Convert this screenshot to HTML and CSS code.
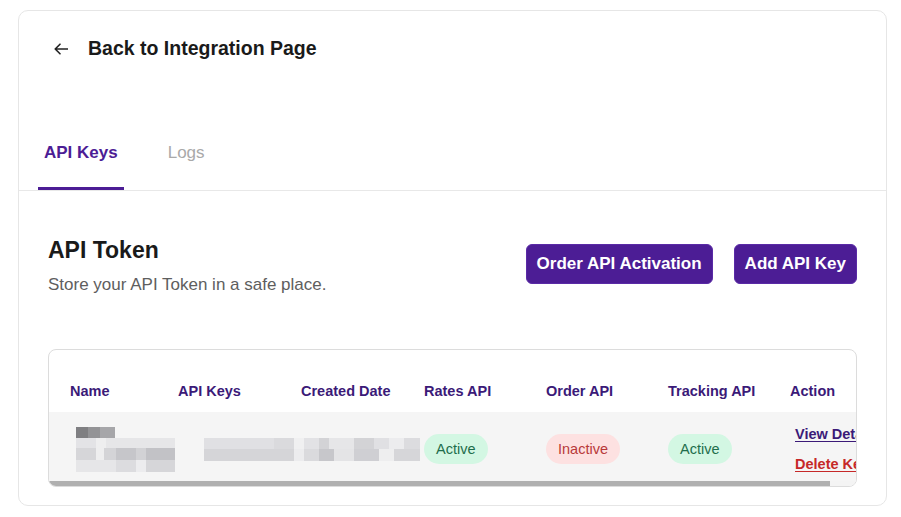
FILE: index.html
```html
<!DOCTYPE html>
<html lang="en">
<head>
<meta charset="utf-8">
<title>API Keys</title>
<link rel="stylesheet" href="styles.css">
</head>
<body>
<div class="card">
  <div class="back">
    <svg class="back-icon" width="14" height="12" viewBox="0 0 14 12" aria-hidden="true">
      <path d="M13.5 6H1.2M6 1.2L1.2 6L6 10.8" fill="none" stroke="#222" stroke-width="1.6" stroke-linecap="round" stroke-linejoin="round"/>
    </svg>
    <span class="back-text">Back to Integration Page</span>
  </div>

  <div class="tabs">
    <div class="tab tab-active">API Keys</div>
    <div class="tab">Logs</div>
  </div>

  <div class="section">
    <div class="section-head">
      <div class="head-text">
        <h1 class="title">API Token</h1>
        <p class="subtitle">Store your API Token in a safe place.</p>
      </div>
      <div class="actions">
        <button class="btn">Order API Activation</button>
        <button class="btn">Add API Key</button>
      </div>
    </div>

    <div class="table-box">
      <div class="table-scroll">
        <table class="keys">
          <colgroup>
            <col class="c-name"><col class="c-key"><col class="c-date"><col class="c-api"><col class="c-api"><col class="c-api"><col class="c-action">
          </colgroup>
          <thead>
            <tr>
              <th class="first">Name</th>
              <th>API Keys</th>
              <th>Created Date</th>
              <th>Rates API</th>
              <th>Order API</th>
              <th>Tracking API</th>
              <th>Action</th>
            </tr>
          </thead>
          <tbody>
            <tr>
              <td class="first">
                <div class="blur-name">
                  <div class="bn1"></div>
                  <div class="bn2"></div>
                  <div class="bn3"></div>
                  <div class="bn4"></div>
                </div>
              </td>
              <td colspan="2" class="key-cell">
                <div class="blur-key">
                  <div class="bk1"></div>
                  <div class="bk2"></div>
                </div>
              </td>
              <td><span class="badge badge-on">Active</span></td>
              <td><span class="badge badge-off">Inactive</span></td>
              <td><span class="badge badge-on">Active</span></td>
              <td class="action-cell">
                <a class="link link-view" href="#">View Details</a>
                <a class="link link-delete" href="#">Delete Key</a>
              </td>
            </tr>
          </tbody>
        </table>
      </div>
      <div class="scrollbar"><div class="thumb"></div></div>
    </div>
  </div>
</div>
</body>
</html>
```

FILE: styles.css
```css
* { box-sizing: border-box; }

html, body {
  margin: 0;
  padding: 0;
  background: #ffffff;
}

body {
  font-family: "Liberation Sans", Arial, sans-serif;
  color: #1a1a1a;
}

.card {
  width: 869px;
  margin: 10px 0 0 18px;
  border: 1px solid #e6e6e6;
  border-radius: 10px;
  background: #ffffff;
  padding-top: 25px;
}

.back {
  display: flex;
  align-items: center;
  gap: 20px;
  padding-left: 35px;
  height: 24px;
}

.back-icon { display: block; margin-top: 2px; }

.back-text {
  font-size: 19.5px;
  font-weight: 700;
  line-height: 24px;
  color: #1a1a1a;
}

.tabs {
  display: flex;
  gap: 38px;
  margin-top: 83px;
  padding-left: 19px;
  border-bottom: 1px solid #e8e8e8;
}

.tab {
  font-size: 17px;
  line-height: 20px;
  padding: 0 6px 24px;
  border-bottom: 3px solid transparent;
  color: #a9a9a9;
}

.tab-active {
  color: #4c1d95;
  font-weight: 700;
  border-bottom-color: #4c1d95;
}

.section {
  padding: 45px 29px 18px;
}

.section-head {
  display: flex;
  align-items: flex-start;
  justify-content: space-between;
}

.title {
  margin: 0;
  font-size: 23px;
  line-height: 28px;
  font-weight: 700;
  color: #1a1a1a;
}

.subtitle {
  margin: 10px 0 0;
  font-size: 17px;
  line-height: 22px;
  color: #5e5e5e;
}

.actions {
  display: flex;
  gap: 21px;
  margin-top: 8px;
}

.btn {
  height: 40px;
  padding: 0 10px;
  border: 1px solid #5a2aa6;
  border-radius: 6px;
  background: #4c1d95;
  color: #ffffff;
  font-family: "Liberation Sans", Arial, sans-serif;
  font-size: 17px;
  font-weight: 700;
}

.table-box {
  margin-top: 53px;
  border: 1px solid #dcdcdc;
  border-radius: 8px;
  overflow: hidden;
  background: #ffffff;
}

.table-scroll { overflow: hidden; }

.keys {
  table-layout: fixed;
  width: 881px;
  border-collapse: collapse;
  font-size: 14.5px;
}

.c-name { width: 129px; }
.c-key { width: 123px; }
.c-date { width: 123px; }
.c-api { width: 122px; }
.c-action { width: 140px; }

.keys th {
  text-align: left;
  font-weight: 700;
  color: #3b1a78;
  line-height: 18px;
  padding: 32px 0 12px;
  white-space: nowrap;
}

.keys .first { padding-left: 21px; }

.keys tbody tr { background: #f5f5f5; }

.keys td {
  height: 69px;
  padding: 5px 0 0;
  vertical-align: middle;
  white-space: nowrap;
}

.keys td.first { padding-left: 27px; }

.blur-name { width: 99px; }

.bn1 {
  width: 39px;
  height: 11px;
  background: linear-gradient(90deg, #7f7f82 0 12px, #939396 12px 24px, #a6a6a9 24px 39px);
}

.bn2 {
  height: 10px;
  background: linear-gradient(90deg, #e3e3e6 0 20px, #eeeeef 20px 30px, #e6e6e8 30px 99px);
}

.bn3 {
  height: 12px;
  background: linear-gradient(90deg, #d6d6d9 0 20px, #eeeeef 20px 28px, #d4d4d7 28px 40px, #c6c6ca 40px 60px, #d2d2d5 60px 70px, #c2c2c6 70px 99px);
}

.bn4 {
  height: 12px;
  background: linear-gradient(90deg, #e6e6e8 0 40px, #dcdcdf 40px 60px, #ececee 60px 70px, #d6d6d9 70px 99px);
}

.key-cell { padding-left: 26px !important; }

.blur-key { width: 216px; }

.bk1 {
  height: 11px;
  background: linear-gradient(90deg, #e0e0e3 0 70px, #dadadd 70px 90px, #f0f0f1 90px 100px, #e2e2e5 100px 115px, #d3d3d6 115px 125px, #e6e6e8 125px 150px, #d3d3d6 150px 170px, #e0e0e3 170px 185px, #ececee 185px 200px, #dcdcdf 200px 216px);
}

.bk2 {
  height: 12px;
  background: linear-gradient(90deg, #d5d5d8 0 90px, #ececee 90px 100px, #dadadd 100px 115px, #c7c7cb 115px 130px, #e4e4e6 130px 150px, #cfcfd3 150px 175px, #eeeeef 175px 190px, #d6d6d9 190px 216px);
}

.badge {
  display: inline-block;
  height: 30px;
  line-height: 30px;
  padding: 0 12px;
  border-radius: 15px;
  font-size: 14.5px;
}

.badge-on {
  background: #d3f7e3;
  color: #1f6e4c;
}

.badge-off {
  background: #fde1e1;
  color: #b83a3a;
}

.action-cell { padding-left: 5px !important; }

.link {
  display: block;
  font-weight: 700;
  line-height: 18px;
  text-decoration: underline;
  text-underline-offset: 2px;
}

.link-view { color: #3b1a78; }

.link-delete {
  color: #c62828;
  margin-top: 12px;
}

.scrollbar {
  height: 5px;
  background: #f4f4f4;
}

.thumb {
  width: 781px;
  height: 5px;
  background: #b0b0b0;
}
```
